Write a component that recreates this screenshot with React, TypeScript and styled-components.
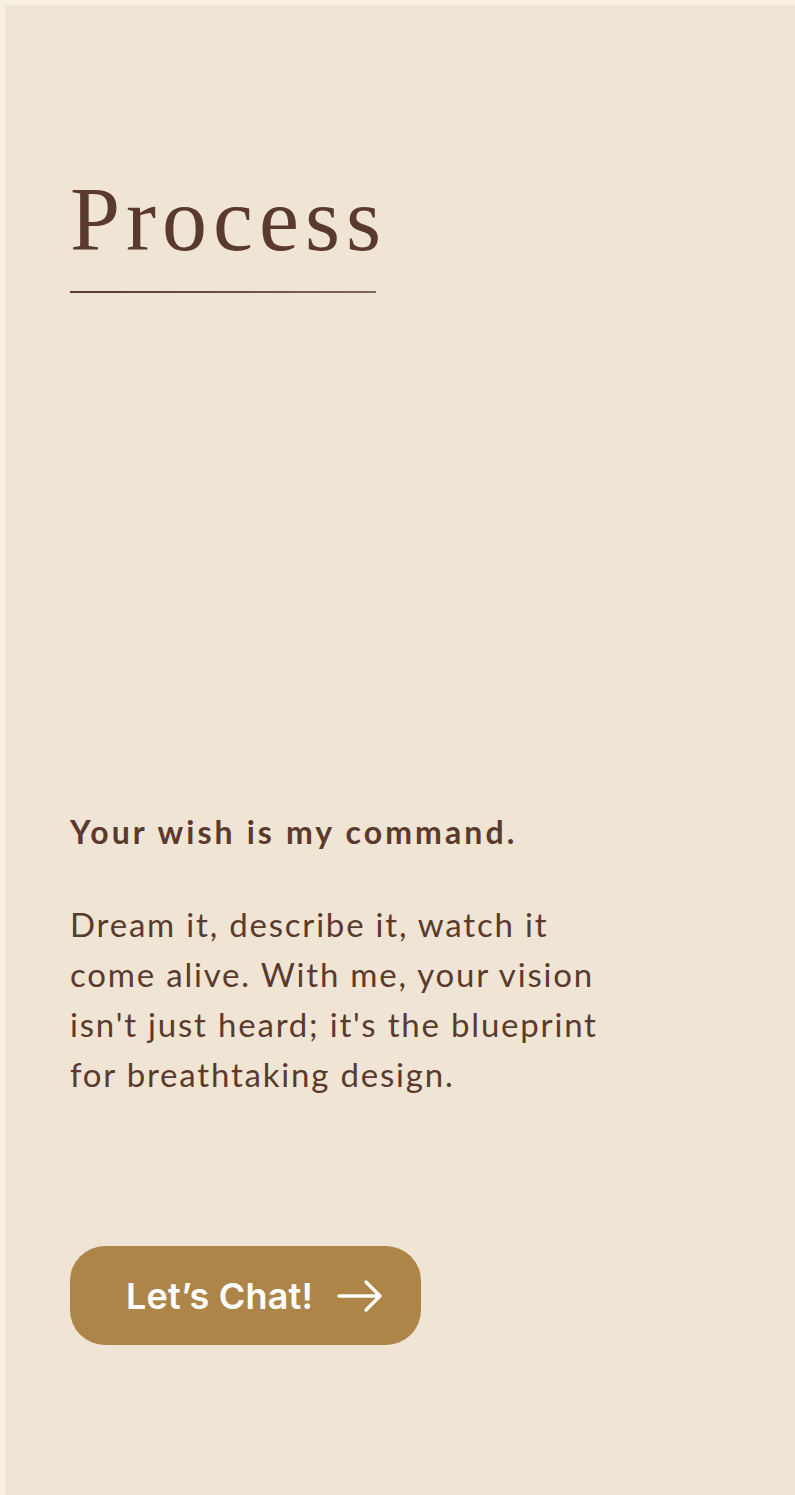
import React from 'react';
import styled, { createGlobalStyle } from 'styled-components';

const GlobalStyle = createGlobalStyle`
  html, body {
    margin: 0;
    padding: 0;
    background: #f8f1e3;
  }
  body {
    padding: 5px 0 0 5px;
  }
  * {
    box-sizing: border-box;
  }
`;

const Section = styled.section`
  background: #f0e5d4;
  min-height: 1490px;
  padding: 170px 65px 0 65px;
  color: #5b3a2e;
  display: flex;
  flex-direction: column;
  align-items: flex-start;
`;

const Title = styled.h2`
  margin: 0;
  font-family: 'Liberation Serif', serif;
  font-weight: 400;
  font-size: 90px;
  line-height: 1;
  letter-spacing: 6px;
`;

const Rule = styled.div`
  width: 306px;
  height: 2px;
  margin-top: 26px;
  background: linear-gradient(90deg, #5a3a2d 0%, #6c5446 60%, #7a6a5c 100%);
`;

const Lead = styled.h3`
  margin: 520px 0 0 0;
  font-family: Lato, 'Open Sans', sans-serif;
  font-weight: 700;
  font-size: 32px;
  line-height: 1.2;
  letter-spacing: 3.1px;
`;

const Body = styled.p`
  margin: 48px 0 0 0;
  max-width: 540px;
  font-family: Lato, 'Open Sans', sans-serif;
  font-weight: 400;
  font-size: 33px;
  line-height: 50px;
  letter-spacing: 1.8px;
`;

const ChatButton = styled.a`
  margin-top: 147px;
  width: 351px;
  height: 99px;
  padding-left: 56px;
  border-radius: 35px;
  background: #ad8549;
  color: #ffffff;
  display: inline-flex;
  align-items: center;
  gap: 24px;
  font-family: Inter, 'Liberation Sans', sans-serif;
  font-weight: 600;
  font-size: 36px;
  letter-spacing: 0.2px;
  text-decoration: none;
`;

const Arrow = () => (
  <svg width="46" height="34" viewBox="0 0 46 34" fill="none">
    <path d="M2 17H43M29 3L43 17L29 31" stroke="#ffffff" strokeWidth="3.4" strokeLinecap="round" strokeLinejoin="round" />
  </svg>
);

const App: React.FC = () => {
  return (
    <>
      <GlobalStyle />
      <Section>
        <Title>Process</Title>
        <Rule />
        <Lead>Your wish is my command.</Lead>
        <Body>
          Dream it, describe it, watch it come alive. With me, your vision isn't just heard; it's the blueprint for breathtaking design.
        </Body>
        <ChatButton href="#">
          Let’s Chat!
          <Arrow />
        </ChatButton>
      </Section>
    </>
  );
};

export default App;
